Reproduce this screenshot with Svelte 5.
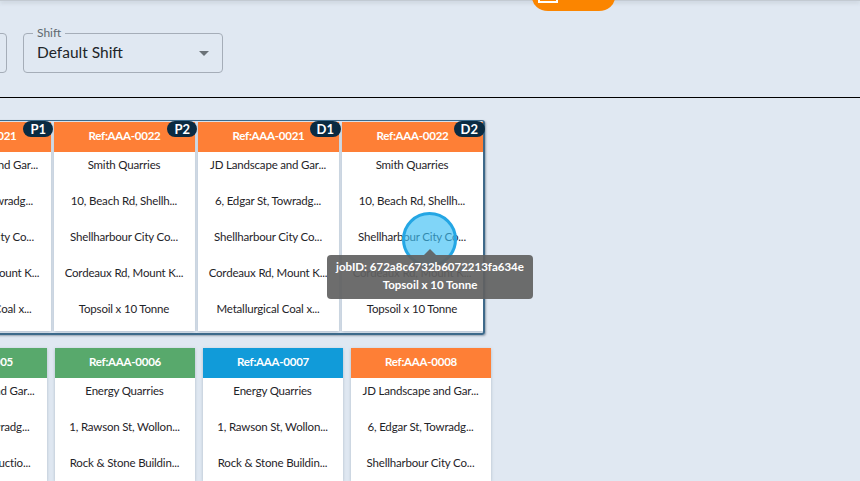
<script>
    const selected = [
        { ref: "Ref:AAA-0021", tag: "P1", color: "orange", rows: ["JD Landscape and Gar...", "6, Edgar St, Towradg...", "Shellharbour City Co...", "Cordeaux Rd, Mount K...", "Metallurgical Coal x..."] },
        { ref: "Ref:AAA-0022", tag: "P2", color: "orange", rows: ["Smith Quarries", "10, Beach Rd, Shellh...", "Shellharbour City Co...", "Cordeaux Rd, Mount K...", "Topsoil x 10 Tonne"] },
        { ref: "Ref:AAA-0021", tag: "D1", color: "orange", rows: ["JD Landscape and Gar...", "6, Edgar St, Towradg...", "Shellharbour City Co...", "Cordeaux Rd, Mount K...", "Metallurgical Coal x..."] },
        { ref: "Ref:AAA-0022", tag: "D2", color: "orange", rows: ["Smith Quarries", "10, Beach Rd, Shellh...", "Shellharbour City Co...", "Cordeaux Rd, Mount K...", "Topsoil x 10 Tonne"] }
    ];

    const others = [
        { ref: "Ref:AAA-0005", color: "green", rows: ["JD Landscape and Gar...", "6, Edgar St, Towradg...", "Harbour Constructio..."] },
        { ref: "Ref:AAA-0006", color: "green", rows: ["Energy Quarries", "1, Rawson St, Wollon...", "Rock & Stone Buildin..."] },
        { ref: "Ref:AAA-0007", color: "blue", rows: ["Energy Quarries", "1, Rawson St, Wollon...", "Rock & Stone Buildin..."] },
        { ref: "Ref:AAA-0008", color: "orange", rows: ["JD Landscape and Gar...", "6, Edgar St, Towradg...", "Shellharbour City Co..."] }
    ];
</script>

<div class="page">
    <div class="top_bar"></div>
    <div class="fab"><span class="fab_icon"></span></div>

    <div class="filters">
        <div class="select stub"></div>
        <div class="select shift">
            <span class="select_label">Shift</span>
            <span class="select_value">Default Shift</span>
            <span class="select_arrow"></span>
        </div>
    </div>

    <hr class="divider" />

    <div class="group">
        {#each selected as job}
            <div class="card">
                <div class="card_head {job.color}">{job.ref}</div>
                <span class="tag">{job.tag}</span>
                {#each job.rows as row}
                    <p class="card_row">{row}</p>
                {/each}
            </div>
        {/each}
    </div>

    <div class="job_list">
        {#each others as job}
            <div class="card plain">
                <div class="card_head {job.color}">{job.ref}</div>
                {#each job.rows as row}
                    <p class="card_row">{row}</p>
                {/each}
            </div>
        {/each}
    </div>

    <div class="pointer"></div>
    <div class="tooltip">
        <span class="tooltip_arrow"></span>
        <div>jobID: 672a8c6732b6072213fa634e</div>
        <div>Topsoil x 10 Tonne</div>
    </div>
</div>

<style>
    :global(body) {
        background-color: #e0e8f2;
        overflow: hidden;
    }

    .page {
        position: relative;
        width: 860px;
        height: 481px;
        overflow: hidden;
        font-family: "Lato", "Liberation Sans", sans-serif;
        color: #212529;
    }

    .top_bar {
        height: 1px;
        background-color: #c3cad2;
        box-shadow: 0 1px 4px rgba(60, 70, 80, 0.45);
    }

    .fab {
        position: absolute;
        top: -30px;
        left: 532px;
        width: 83px;
        height: 41px;
        background-color: #fb8500;
        border-radius: 0 0 16px 16px / 0 0 14px 14px;
    }

    .fab_icon {
        position: absolute;
        left: 6px;
        top: 22px;
        width: 16px;
        height: 9px;
        border: 2px solid #fff;
        border-top: none;
        background-color: #fb8500;
    }

    .filters {
        display: flex;
        gap: 16px;
        margin: 32px 0 0 -93px;
    }

    .select {
        position: relative;
        box-sizing: border-box;
        height: 40px;
        border: 1px solid #a5adb8;
        border-radius: 4px;
    }

    .stub {
        width: 100px;
    }

    .shift {
        display: flex;
        align-items: center;
        justify-content: space-between;
        width: 200px;
        padding: 0 13px;
    }

    .select_label {
        position: absolute;
        top: -8px;
        left: 9px;
        padding: 0 4px;
        background-color: #e0e8f2;
        font-size: 12px;
        line-height: 14px;
        color: #5f6870;
    }

    .select_value {
        font-size: 15.5px;
        line-height: 36px;
        padding-bottom: 2px;
    }

    .select_arrow {
        width: 0;
        height: 0;
        border-left: 5px solid transparent;
        border-right: 5px solid transparent;
        border-top: 5px solid #6b7278;
    }

    .divider {
        margin: 24px 0 0;
        border: none;
        border-top: 1px solid #000;
    }

    .group {
        display: flex;
        gap: 3px;
        box-sizing: border-box;
        width: 580px;
        height: 215px;
        margin: 22px 0 0 -95px;
        padding: 1px 0 2px 0;
        justify-content: flex-end;
        border: 2px solid #3c6a8c;
        border-width: 1px 2px 2px 1px;
        border-radius: 3px;
        box-shadow: 1px 1px 2px rgba(40, 60, 80, 0.4);
    }

    .job_list {
        display: flex;
        gap: 8px;
        margin: 13px 0 0 -93px;
    }

    .card {
        position: relative;
        flex: none;
        box-sizing: border-box;
        width: 141px;
        background-color: #fff;
        box-shadow: 0 1px 3px rgba(90, 110, 130, 0.35);
    }

    .plain {
        width: 140px;
    }

    .card_head {
        height: 30px;
        line-height: 28px;
        text-align: center;
        font-size: 11.5px;
        font-weight: 700;
        letter-spacing: -0.25px;
        color: #fff;
        margin-bottom: -5px;
    }

    .orange {
        background-color: #fe7f36;
    }

    .green {
        background-color: #58a96c;
    }

    .blue {
        background-color: #119bd9;
    }

    .tag {
        position: absolute;
        top: -1px;
        right: -2px;
        height: 16px;
        padding: 0 7px;
        line-height: 16px;
        border-radius: 8px;
        background-color: #0a2b42;
        color: #fff;
        font-size: 13px;
        font-weight: 700;
    }

    .card_row {
        margin: 0;
        padding-right: 1px;
        height: 36px;
        line-height: 36px;
        text-align: center;
        font-size: 11.5px;
        letter-spacing: -0.18px;
        white-space: nowrap;
        color: #1f2429;
    }

    .pointer {
        position: absolute;
        left: 402px;
        top: 212px;
        box-sizing: border-box;
        width: 55px;
        height: 55px;
        border-radius: 50%;
        border: 3px solid #24a6e4;
        background-color: rgba(60, 190, 245, 0.65);
    }

    .tooltip {
        position: absolute;
        left: 327px;
        top: 255px;
        box-sizing: border-box;
        width: 206px;
        height: 44px;
        padding: 3px 8px;
        border-radius: 4px;
        background-color: rgba(97, 97, 97, 0.92);
        color: #fff;
        font-size: 11.5px;
        font-weight: 700;
        line-height: 18px;
        text-align: center;
        white-space: nowrap;
    }

    .tooltip_arrow {
        position: absolute;
        top: -6px;
        left: 97px;
        width: 0;
        height: 0;
        border-left: 6px solid transparent;
        border-right: 6px solid transparent;
        border-bottom: 6px solid rgba(97, 97, 97, 0.92);
    }
</style>
